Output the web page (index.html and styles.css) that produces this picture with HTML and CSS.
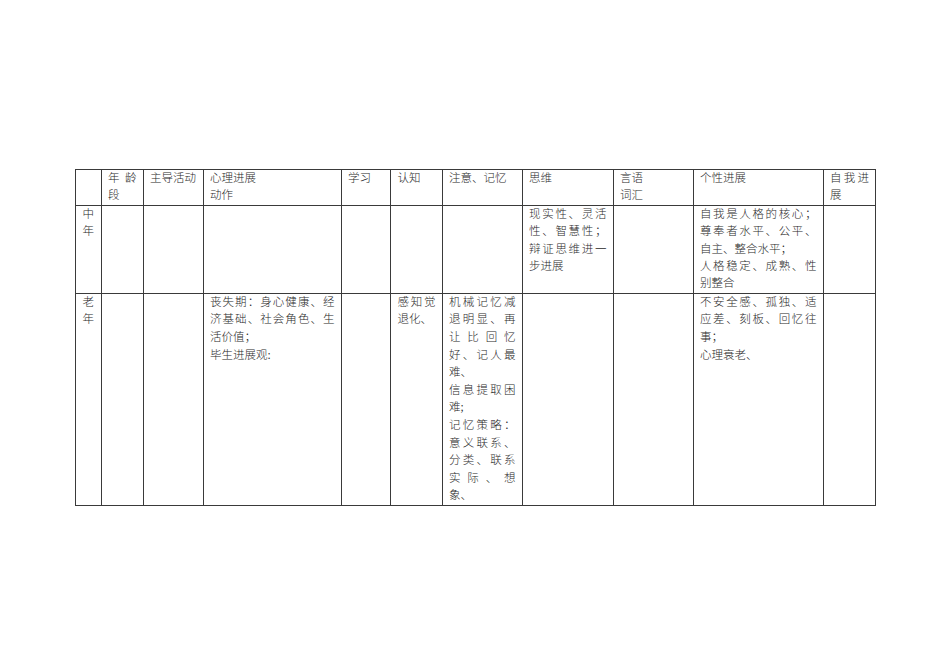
FILE: index.html
```html
<!DOCTYPE html>
<html lang="zh-CN">
<head>
<meta charset="utf-8">
<title>心理进展</title>
<link rel="stylesheet" href="styles.css">
</head>
<body>
<table class="grid">
  <colgroup>
    <col class="c1"><col class="c2"><col class="c3"><col class="c4"><col class="c5"><col class="c6">
    <col class="c7"><col class="c8"><col class="c9"><col class="c10"><col class="c11">
  </colgroup>
  <tr class="head">
    <td></td>
    <td><div class="j">年龄</div><div>段</div></td>
    <td><div>主导活动</div></td>
    <td><div>心理进展</div><div>动作</div></td>
    <td><div>学习</div></td>
    <td><div>认知</div></td>
    <td><div>注意、记忆</div></td>
    <td><div>思维</div></td>
    <td><div>言语</div><div>词汇</div></td>
    <td><div>个性进展</div></td>
    <td><div class="j">自我进</div><div>展</div></td>
  </tr>
  <tr class="mid">
    <td><div>中</div><div>年</div></td>
    <td></td>
    <td></td>
    <td></td>
    <td></td>
    <td></td>
    <td></td>
    <td><div class="j">现实性、灵活</div><div class="j">性、智慧性；</div><div class="j">辩证思维进一</div><div>步进展</div></td>
    <td></td>
    <td><div class="j">自我是人格的核心；</div><div class="j">尊奉者水平、公平、</div><div>自主、整合水平；</div><div class="j">人格稳定、成熟、性</div><div>别整合</div></td>
    <td></td>
  </tr>
  <tr class="old">
    <td><div>老</div><div>年</div></td>
    <td></td>
    <td></td>
    <td><div class="j">丧失期：身心健康、经</div><div class="j">济基础、社会角色、生</div><div>活价值；</div><div>毕生进展观:</div></td>
    <td></td>
    <td><div class="j">感知觉</div><div>退化、</div></td>
    <td><div class="j">机械记忆减</div><div class="j">退明显、再</div><div class="j">让比回忆</div><div class="j">好、记人最</div><div>难、</div><div class="j">信息提取困</div><div>难;</div><div class="j">记忆策略：</div><div class="j">意义联系、</div><div class="j">分类、联系</div><div class="j">实际、想</div><div>象、</div></td>
    <td></td>
    <td></td>
    <td><div class="j">不安全感、孤独、适</div><div class="j">应差、刻板、回忆往</div><div>事；</div><div>心理衰老、</div></td>
    <td></td>
  </tr>
</table>
</body>
</html>
```
FILE: styles.css
```css
html, body {
  margin: 0;
  padding: 0;
  background: #ffffff;
}
body {
  width: 950px;
  height: 672px;
  overflow: hidden;
}
.grid {
  margin: 169px 0 0 75px;
  width: 800px;
  table-layout: fixed;
  border-collapse: collapse;
  font-family: "Liberation Serif", "Noto Sans CJK SC", serif;
  font-size: 11.5px;
  line-height: 17.4px;
  color: #2a2a2a;
  font-weight: 300;
}
.grid td {
  border: 1px solid #3a3a3a;
  padding: 0 6px 0 6.5px;
  vertical-align: top;
  overflow: hidden;
}
.c1 { width: 25.5px; }
.c2 { width: 42px; }
.c3 { width: 60px; }
.c4 { width: 138px; }
.c5 { width: 49.5px; }
.c6 { width: 51.5px; }
.c7 { width: 80px; }
.c8 { width: 91px; }
.c9 { width: 80px; }
.c10 { width: 130px; }
.c11 { width: 52.5px; }
.head { height: 34px; }
.mid { height: 88px; }
.old { height: 212px; line-height: 17.6px; }
.j {
  text-align: justify;
  text-align-last: justify;
}
```
